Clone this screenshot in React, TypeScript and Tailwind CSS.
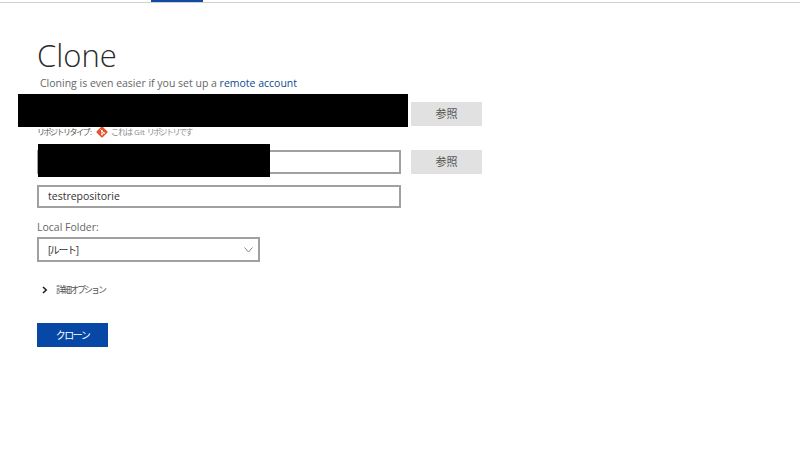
import React from 'react';

const browseBtn = 'w-[71px] h-[24px] bg-[#e1e1e1] text-[#555] text-[11px] flex items-center justify-center shrink-0';
const inputBox = 'w-[364px] border-2 border-[#a0a0a0] bg-white';

const GitIcon = () => (
  <svg width="12" height="12" viewBox="0 0 12 12" className="ml-[4px] mr-[3px]">
    <rect x="1.8" y="1.8" width="8.4" height="8.4" rx="1" transform="rotate(45 6 6)" fill="#e8532f" />
    <path d="M4.4 3.4 L8 7 M6 5.2 V8.6" stroke="#fff" strokeWidth="1" fill="none" />
    <circle cx="6" cy="8.4" r="0.9" fill="#fff" />
    <circle cx="8" cy="7" r="0.9" fill="#fff" />
    <circle cx="6" cy="5" r="0.9" fill="#fff" />
  </svg>
);

export default function App() {
  return (
    <div className="relative w-[800px] h-[459px] bg-white overflow-hidden font-['Open_Sans','Noto_Sans_CJK_JP',sans-serif]">
      {/* top tab strip */}
      <div className="h-[3px] border-b border-[#d0d0d0] pl-[151px]">
        <div className="w-[52px] h-[2px] bg-[#0f4aa3]" />
      </div>

      <div className="pl-[37px] pt-[34px]">
        <h1 className="text-[31px] leading-[36px] text-[#2b2b2b] font-light">Clone</h1>
        <p className="ml-[3px] mt-[2px] text-[10.5px] leading-[16px] text-[#666]">
          Cloning is even easier if you set up a <span className="text-[#0f4a8f]">remote account</span>
        </p>

        <div className="flex items-center mt-[11px] h-[24px]">
          <div className="w-[364px]" />
          <div className={`ml-[10px] ${browseBtn}`}>参照</div>
        </div>

        <div className="flex items-center h-[12px] text-[8px]">
          <span className="text-[#555] tracking-[-1.5px]">リポジトリタイプ</span>
          <span className="text-[#555] ml-[1px]">:</span>
          <GitIcon />
          <span className="text-[#888] tracking-[-1px]">これは</span>
          <span className="text-[#888] ml-[2px]">Git</span>
          <span className="text-[#888] ml-[2px] tracking-[-1.6px]">リポジトリです</span>
        </div>

        <div className="flex items-center mt-[12px]">
          <div className={`${inputBox} h-[24px]`} />
          <div className={`ml-[10px] ${browseBtn}`}>参照</div>
        </div>

        <div className={`${inputBox} h-[23px] mt-[11px] flex items-center pl-[9px] pt-[1px] text-[10.5px] text-[#333]`}>
          testrepositorie
        </div>

        <div className="mt-[11px] text-[10.5px] leading-[16px] text-[#666]">Local Folder:</div>
        <div className="mt-[2px] w-[223px] h-[25px] border-2 border-[#a0a0a0] flex items-center justify-between pl-[9px] pr-[5px] text-[10px] text-[#333]">
          <span className="tracking-[-1.4px] pt-[1px]">[ルート]</span>
          <svg width="9" height="6" viewBox="0 0 9 6" fill="none" stroke="#888" strokeWidth="1">
            <path d="M0.5 0.5 L4.5 5 L8.5 0.5" />
          </svg>
        </div>

        <div className="flex items-center mt-[20px] h-[16px] pl-[5px] text-[9px] text-[#555]">
          <svg width="6" height="8" viewBox="0 0 6 8" fill="none" stroke="#222" strokeWidth="1.6">
            <path d="M1 1 L4.2 4 L1 7" />
          </svg>
          <span className="ml-[8px] tracking-[-2px]">詳細オプション</span>
        </div>

        <div className="mt-[25px] w-[71px] h-[24px] bg-[#0747a6] text-white text-[10px] tracking-[-1.5px] flex items-center justify-center">
          クローン
        </div>
      </div>

      {/* redacted areas */}
      <div className="absolute left-[18px] top-[94px] w-[390px] h-[33px] bg-black" />
      <div className="absolute left-[38px] top-[144px] w-[232px] h-[33px] bg-black" />
    </div>
  );
}
